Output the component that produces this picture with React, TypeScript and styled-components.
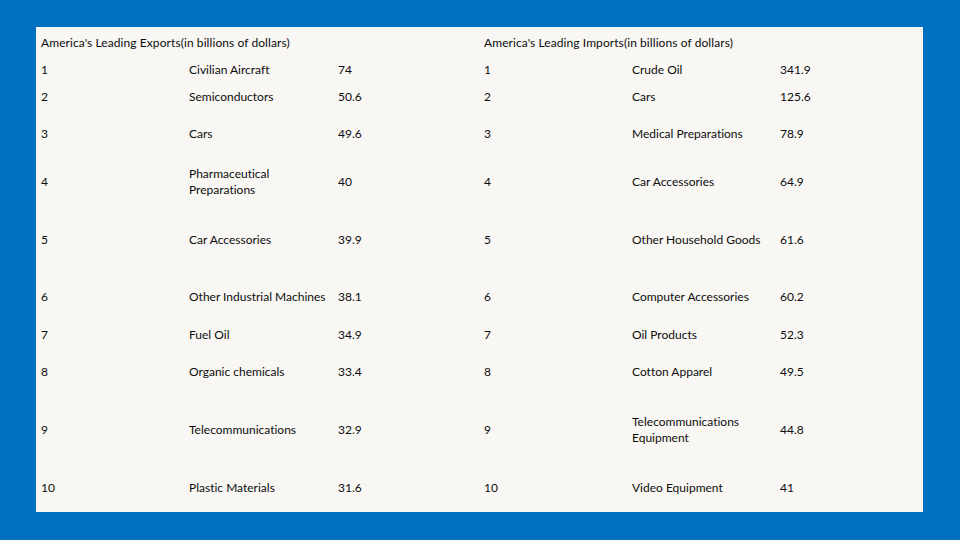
import styled, { createGlobalStyle } from "styled-components";

const GlobalStyle = createGlobalStyle`
    html, body {
        margin: 0;
        padding: 0;
        width: 960px;
        height: 540px;
        overflow: hidden;
        background: #0070c0;
    }
`;

const Slide = styled.div`
    width: 960px;
    height: 540px;
    box-sizing: border-box;
    padding: 27px 37px 28px 36px;
    background: #0070c0;
    font-family: Lato, "Liberation Sans", sans-serif;
    font-size: 12px;
    font-variant-ligatures: none;
    color: #0d0d0d;
`;

const Table = styled.table`
    width: 887px;
    height: 485px;
    border-collapse: collapse;
    table-layout: fixed;
    background: #f8f7f4;
`;

const Row = styled.tr<{ h: number }>`
    height: ${(p) => p.h}px;
`;

const Cell = styled.td`
    padding: 0 5px;
    vertical-align: middle;
    line-height: 16px;
    white-space: normal;
`;

const HeadCell = styled(Cell)`
    letter-spacing: 0.08px;
`;

type Item = { name: string; value: string };

const exportsData: Item[] = [
    { name: "Civilian Aircraft", value: "74" },
    { name: "Semiconductors", value: "50.6" },
    { name: "Cars", value: "49.6" },
    { name: "Pharmaceutical Preparations", value: "40" },
    { name: "Car Accessories", value: "39.9" },
    { name: "Other Industrial Machines", value: "38.1" },
    { name: "Fuel Oil", value: "34.9" },
    { name: "Organic chemicals", value: "33.4" },
    { name: "Telecommunications", value: "32.9" },
    { name: "Plastic Materials", value: "31.6" },
];

const importsData: Item[] = [
    { name: "Crude Oil", value: "341.9" },
    { name: "Cars", value: "125.6" },
    { name: "Medical Preparations", value: "78.9" },
    { name: "Car Accessories", value: "64.9" },
    { name: "Other Household Goods", value: "61.6" },
    { name: "Computer Accessories", value: "60.2" },
    { name: "Oil Products", value: "52.3" },
    { name: "Cotton Apparel", value: "49.5" },
    { name: "Telecommunications Equipment", value: "44.8" },
    { name: "Video Equipment", value: "41" },
];

// row heights read off the slide, rows are not even
const rowHeights = [24, 30, 44, 52, 64, 50, 26, 48, 68, 48];

const App = () => {
    return (
        <>
            <GlobalStyle />
            <Slide>
                <Table>
                    <colgroup>
                        <col style={{ width: 148 }} />
                        <col style={{ width: 149 }} />
                        <col style={{ width: 146 }} />
                        <col style={{ width: 148 }} />
                        <col style={{ width: 148 }} />
                        <col style={{ width: 148 }} />
                    </colgroup>
                    <tbody>
                        <Row h={31}>
                            <HeadCell colSpan={3}>America's Leading Exports(in billions of dollars)</HeadCell>
                            <HeadCell colSpan={3}>America's Leading Imports(in billions of dollars)</HeadCell>
                        </Row>
                        {rowHeights.map((h, i) => (
                            <Row h={h} key={i}>
                                <Cell>{i + 1}</Cell>
                                <Cell>{exportsData[i].name}</Cell>
                                <Cell>{exportsData[i].value}</Cell>
                                <Cell>{i + 1}</Cell>
                                <Cell>{importsData[i].name}</Cell>
                                <Cell>{importsData[i].value}</Cell>
                            </Row>
                        ))}
                    </tbody>
                </Table>
            </Slide>
        </>
    );
};

export default App;
